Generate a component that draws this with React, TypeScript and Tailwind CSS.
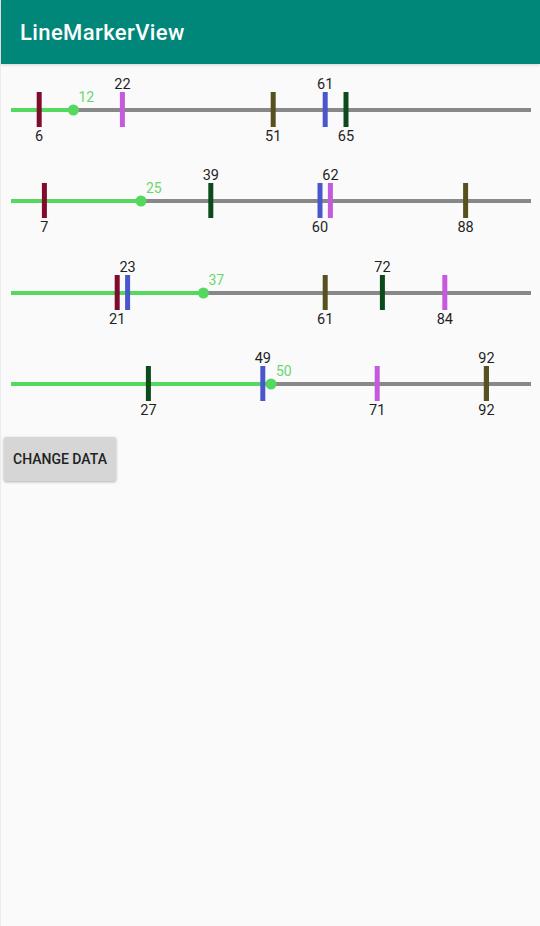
import React from "react";

type Marker = { value: number; color: string };

const RED = "#7f0c2c";
const PURPLE = "#c45ade";
const OLIVE = "#57501f";
const BLUE = "#4a57cc";
const GREEN = "#0c4a1c";

const rows: { progress: number; markers: Marker[] }[] = [
  {
    progress: 12,
    markers: [
      { value: 6, color: RED },
      { value: 22, color: PURPLE },
      { value: 51, color: OLIVE },
      { value: 61, color: BLUE },
      { value: 65, color: GREEN },
    ],
  },
  {
    progress: 25,
    markers: [
      { value: 7, color: RED },
      { value: 39, color: GREEN },
      { value: 60, color: BLUE },
      { value: 62, color: PURPLE },
      { value: 88, color: OLIVE },
    ],
  },
  {
    progress: 37,
    markers: [
      { value: 21, color: RED },
      { value: 23, color: BLUE },
      { value: 61, color: OLIVE },
      { value: 72, color: GREEN },
      { value: 84, color: PURPLE },
    ],
  },
  {
    progress: 50,
    markers: [
      { value: 27, color: GREEN },
      { value: 49, color: BLUE },
      { value: 71, color: PURPLE },
      { value: 92, color: OLIVE },
      { value: 92, color: OLIVE },
    ],
  },
];

const LINE_Y = 46;
const START = 10;
const END = 530;
const SCALE = 5.2;

const LineMarkerView: React.FC<{ progress: number; markers: Marker[] }> = ({
  progress,
  markers,
}) => {
  const dotX = START + progress * SCALE;
  return (
    <svg width={540} height={91.3} className="block">
      <line x1={START} y1={LINE_Y} x2={END} y2={LINE_Y} stroke="#888888" strokeWidth={4} />
      <line x1={START} y1={LINE_Y} x2={dotX} y2={LINE_Y} stroke="#55d85e" strokeWidth={4} />
      <circle cx={dotX} cy={LINE_Y} r={5.5} fill="#55d85e" />
      <text
        x={dotX + 5}
        y={LINE_Y - 8}
        fill="#6ad66f"
        fontSize={14}
        fontFamily="Roboto, sans-serif"
      >
        {progress}
      </text>
      {markers.map((m, i) => {
        const x = 7 + m.value * SCALE;
        const below = i % 2 === 0;
        return (
          <g key={i}>
            <rect x={x - 2.5} y={LINE_Y - 18} width={5} height={35} fill={m.color} />
            <text
              x={x}
              y={below ? LINE_Y + 31 : LINE_Y - 21}
              textAnchor="middle"
              fill="#1f1f1f"
              fontSize={14.5}
              fontFamily="Roboto, sans-serif"
            >
              {m.value}
            </text>
          </g>
        );
      })}
    </svg>
  );
};

export default function App() {
  return (
    <div className="w-[540px] h-[926px] bg-[#fafafa] border-l border-[#ececec] font-['Roboto',sans-serif] flex flex-col">
      <div className="h-16 bg-[#00877a] flex items-center px-[19px] shadow-[0_1px_3px_rgba(0,0,0,0.15)]">
        <h1 className="text-white text-[22px] font-medium tracking-[0.4px]">LineMarkerView</h1>
      </div>
      <div className="flex flex-col">
        {rows.map((r, i) => (
          <LineMarkerView key={i} progress={r.progress} markers={r.markers} />
        ))}
      </div>
      <div className="mt-[8px] ml-[3px]">
        <button className="w-28 h-11 bg-[#d6d6d6] rounded-[2px] shadow-[0_1px_3px_rgba(0,0,0,0.3)] text-[14px] font-medium text-[#222]">
          CHANGE DATA
        </button>
      </div>
    </div>
  );
}
